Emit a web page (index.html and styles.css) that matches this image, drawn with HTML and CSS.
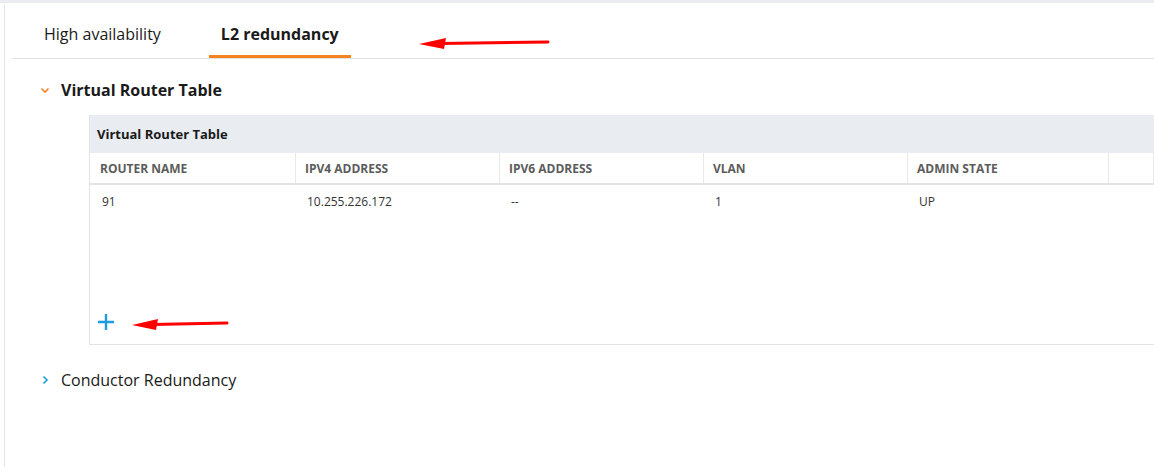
FILE: index.html
```html
<!DOCTYPE html>
<html lang="en">
<head>
  <meta charset="UTF-8">
  <title>L2 redundancy</title>
  <link rel="stylesheet" href="styles.css">
</head>
<body>

  <div class="top-strip"></div>

  <div class="panel">
    <div class="tabs">
      <div class="tab">High availability</div>
      <div class="tab active">L2 redundancy</div>
    </div>

    <div class="section">
      <div class="section-head">
        <svg class="chev" width="10" height="10" viewBox="0 0 10 10"><path d="M1.5 3.5 L5 7 L8.5 3.5" fill="none" stroke="#f5821f" stroke-width="1.6"/></svg>
        <span class="section-title bold">Virtual Router Table</span>
      </div>

      <div class="table-box">
        <div class="table-title">Virtual Router Table</div>
        <div class="row head">
          <div class="cell">ROUTER NAME</div>
          <div class="cell">IPV4 ADDRESS</div>
          <div class="cell">IPV6 ADDRESS</div>
          <div class="cell">VLAN</div>
          <div class="cell">ADMIN STATE</div>
          <div class="cell rest"></div>
        </div>
        <div class="row data">
          <div class="cell">91</div>
          <div class="cell">10.255.226.172</div>
          <div class="cell">--</div>
          <div class="cell">1</div>
          <div class="cell">UP</div>
          <div class="cell rest"></div>
        </div>
        <div class="add">
          <svg width="18" height="18" viewBox="0 0 18 18"><path d="M9 1 V17 M1 9 H17" stroke="#1e9ce0" stroke-width="2.4"/></svg>
        </div>
      </div>
    </div>

    <div class="section">
      <div class="section-head closed">
        <svg class="chev" width="10" height="10" viewBox="0 0 10 10"><path d="M3.5 1.5 L7 5 L3.5 8.5" fill="none" stroke="#1e9ce0" stroke-width="1.6"/></svg>
        <span class="section-title">Conductor Redundancy</span>
      </div>
    </div>
  </div>

  <svg class="marks" width="1154" height="467" viewBox="0 0 1154 467">
    <path d="M548 42 L440 43.5" stroke="#f00" stroke-width="3" stroke-linecap="round"/>
    <path d="M419 44 L446 38 L444 49 Z" fill="#f00"/>
    <path d="M227 323 L152 324.5" stroke="#f00" stroke-width="3" stroke-linecap="round"/>
    <path d="M132 325 L158 319 L156 330 Z" fill="#f00"/>
  </svg>

</body>
</html>
```

FILE: styles.css
```css
body {
  margin: 0;
  background-color: #ffffff;
  font-family: 'Open Sans', sans-serif;
  color: #1a1a1a;
  position: relative;
  height: 467px;
  overflow: hidden;
}
.top-strip {
  height: 3px;
  background-color: #e9edf2;
}
.panel {
  margin-left: 4px;
  margin-top: 2px;
  border-left: 1px solid #e3e3e3;
  height: 462px;
  padding-left: 7px;
}
.tabs {
  display: flex;
  gap: 36px;
  padding-left: 20px;
  border-bottom: 1px solid #e3e3e3;
  height: 53px;
  align-items: flex-end;
}
.tab {
  font-size: 16px;
  padding: 0 12px 10px;
  border-bottom: 3px solid transparent;
  color: #1a1a1a;
}
.tab.active {
  font-weight: 700;
  border-bottom-color: #f5821f;
}
.section {
  padding-left: 28px;
}
.section-head {
  display: flex;
  align-items: center;
  gap: 11px;
  height: 22px;
  margin-top: 20px;
}
.section-head.closed {
  margin-top: 24px;
}
.section-title {
  font-size: 16px;
}
.bold {
  font-weight: 700;
}
.table-box {
  margin-top: 14px;
  margin-left: 49px;
  border-left: 1px solid #e3e3e3;
  border-bottom: 1px solid #e3e3e3;
  height: 229px;
  display: flex;
  flex-direction: column;
}
.table-title {
  background-color: #e9ecf1;
  height: 38px;
  line-height: 38px;
  padding-left: 7px;
  font-size: 13px;
  font-weight: 700;
}
.row {
  display: flex;
}
.row.head {
  height: 30px;
  border-bottom: 2px solid #e3e3e3;
}
.row.head .cell {
  font-size: 12px;
  font-weight: 700;
  color: #5c5c5c;
  line-height: 31px;
  height: 30px;
  border-right: 1px solid #e9e9e9;
  padding-left: 9px;
}
.cell {
  width: 204px;
  flex: none;
  box-sizing: border-box;
}
.row .cell:first-child {
  width: 206px;
}
.row.head .cell:first-child {
  padding-left: 10px;
}
.row .cell:nth-child(5) {
  width: 201px;
}
.cell.rest {
  flex: 1;
}
.row.data .cell {
  font-size: 12px;
  color: #333333;
  padding-left: 11px;
  line-height: 34px;
}
.row.data .cell:first-child {
  padding-left: 12px;
}
.add {
  margin-top: auto;
  padding: 0 0 13px 7px;
  display: flex;
}
.marks {
  position: absolute;
  top: 0;
  left: 0;
  pointer-events: none;
}
```
